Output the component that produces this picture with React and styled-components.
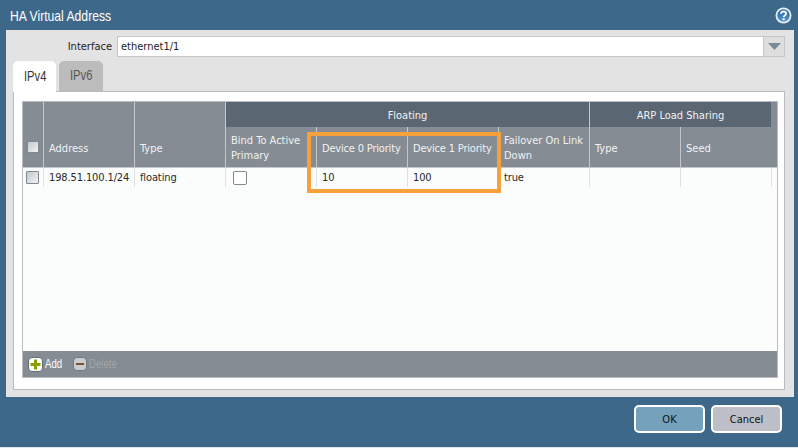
import React from "react";
import styled, { createGlobalStyle } from "styled-components";

const GlobalStyle = createGlobalStyle`
  html, body {
    margin: 0;
    padding: 0;
    background: #3d6889;
  }
  body {
    font-family: "DejaVu Sans Condensed", "DejaVu Sans", sans-serif;
    font-size: 11px;
    color: #222;
  }
`;

const Dialog = styled.div`
  position: relative;
  width: 798px;
  height: 448px;
  overflow: hidden;
  background: #3d6889;
  border-bottom: 1px solid #dfe8ee;
  box-sizing: border-box;
  display: flex;
  flex-direction: column;
`;

// squeezed text, the original font is narrower than anything installed
const Narrow = styled.span`
  display: inline-block;
  width: ${(p) => p.$width}px;
  font-family: "Liberation Sans", sans-serif;
  font-size: ${(p) => p.$size}px;
  white-space: nowrap;
  transform: scaleX(${(p) => p.$scale});
  transform-origin: left center;
`;

const TitleBar = styled.div`
  height: 30px;
  flex: none;
  display: flex;
  align-items: center;
  justify-content: space-between;
  padding: 0 6px 0 10px;
  color: #fff;
`;

const Panel = styled.div`
  height: 367px;
  flex: none;
  margin: 0 4px 0 6px;
  padding: 6px 9px 7px 7px;
  box-sizing: border-box;
  background: #e3e3e3;
  display: flex;
  flex-direction: column;
`;

const FieldRow = styled.div`
  display: flex;
  align-items: center;
  height: 21px;
  flex: none;
`;

const FieldLabel = styled.label`
  width: 99px;
  margin-right: 5px;
  text-align: right;
`;

const Combo = styled.div`
  flex: 1;
  height: 21px;
  box-sizing: border-box;
  border: 1px solid #c6c6c6;
  background: #fff;
  display: flex;
  align-items: center;
  padding-left: 3px;
`;

const ComboValue = styled.span`
  flex: 1;
`;

const ComboButton = styled.div`
  width: 20px;
  height: 19px;
  background: #dedede;
  border-left: 1px solid #c6c6c6;
  display: flex;
  align-items: center;
  justify-content: center;
`;

const Tabs = styled.div`
  display: flex;
  gap: 3px;
  margin-top: 4px;
  height: 30px;
  flex: none;
`;

const Tab = styled.div`
  width: ${(p) => (p.$active ? 43 : 44)}px;
  box-sizing: border-box;
  display: flex;
  align-items: center;
  justify-content: center;
  padding-bottom: 2px;
  border-radius: 5px 5px 0 0;
  color: ${(p) => (p.$active ? "#333" : "#555")};
  background: ${(p) => (p.$active ? "#fff" : "#bcbcbc")};
  margin-bottom: ${(p) => (p.$active ? "-1px" : "0")};
  position: relative;
`;

const TabBody = styled.div`
  flex: 1;
  box-sizing: border-box;
  border: 1px solid #bbb;
  background: #fff;
  padding: 9px 9px 11px 8px;
  display: flex;
`;

const GridFrame = styled.div`
  flex: 1;
  box-sizing: border-box;
  border: 1px solid #b9bdc1;
  background: #fafdfb;
  display: flex;
  flex-direction: column;
`;

const Head = styled.div`
  display: grid;
  grid-template-columns: 20px repeat(8, 91px) 1fr;
  grid-template-rows: 25px 40px;
  background: #858c93;
  color: #f1f3f4;
  border-bottom: 1px solid #c4c8cb;
  flex: none;
`;

const HeadCell = styled.div`
  grid-column: ${(p) => p.$col};
  grid-row: ${(p) => p.$row || 2};
  box-sizing: border-box;
  border-left: ${(p) => (p.$first ? "none" : "1px solid #c4c8cb")};
  padding: ${(p) => (p.$first ? "0 0 14px 4px" : p.$tall ? "0 0 11px 5px" : "2px 0 0 5px")};
  display: flex;
  align-items: ${(p) => (p.$tall ? "flex-end" : "center")};
  line-height: 15px;
`;

const NoWrap = styled.span`
  white-space: nowrap;
  letter-spacing: -0.18px;
`;

const BandCell = styled.div`
  grid-column: ${(p) => p.$col};
  grid-row: 1;
  background: #5a6773;
  border-left: 1px solid #c4c8cb;
  display: flex;
  align-items: center;
  justify-content: center;
  padding-top: 1px;
`;

const Row = styled.div`
  display: grid;
  grid-template-columns: 20px repeat(8, 91px) 1fr;
  height: 19px;
  flex: none;
`;

const Cell = styled.div`
  box-sizing: border-box;
  border-left: ${(p) => (p.$first ? "none" : "1px solid #dfe1e3")};
  padding-left: ${(p) => p.$indent || 5}px;
  display: flex;
  align-items: center;
  white-space: nowrap;
  letter-spacing: -0.12px;
  color: #2a2a2a;
`;

const GridBody = styled.div`
  flex: 1;
`;

const Toolbar = styled.div`
  height: 26px;
  flex: none;
  background: #858c93;
  display: flex;
  align-items: center;
  padding-left: 5px;
`;

const ToolButton = styled.div`
  display: flex;
  align-items: center;
  gap: 2px;
  margin-right: 11px;
  color: ${(p) => (p.$disabled ? "#a0a5aa" : "#fff")};
`;

const SelectBox = styled.span`
  display: block;
  flex: none;
  box-sizing: border-box;
  width: ${(p) => p.$size}px;
  height: ${(p) => p.$size}px;
  border: 1px solid #7d8890;
  background: ${(p) => (p.$plain ? "#fff" : "linear-gradient(135deg, #c5c8cb, #f1f2f3)")};
  border-radius: ${(p) => (p.$plain ? "2px" : "1px")};
`;

const Highlight = styled.div`
  position: absolute;
  left: 307px;
  top: 132px;
  width: 194px;
  height: 61px;
  box-sizing: border-box;
  border: 4px solid #f7a13d;
  pointer-events: none;
`;

const Footer = styled.div`
  flex: 1;
  display: flex;
  justify-content: flex-end;
  gap: 6px;
  padding: 8px 16px 0 0;
`;

const Button = styled.button`
  width: 71px;
  height: 28px;
  box-sizing: border-box;
  border: 2px solid #fff;
  border-radius: 5px;
  font: inherit;
  font-size: 11px;
  color: #111;
  background: ${(p) => (p.$primary ? "#75a1bd" : "#bcbfc8")};
`;

const HelpIcon = () => (
  <svg width="17" height="17" viewBox="0 0 17 17">
    <defs>
      <linearGradient id="helpFill" x1="0" y1="0" x2="0" y2="1">
        <stop offset="0" stopColor="#1f5f9c" />
        <stop offset="1" stopColor="#5b9ad0" />
      </linearGradient>
    </defs>
    <circle cx="8.5" cy="8.5" r="8" fill="#e6eef4" />
    <circle cx="8.5" cy="8.5" r="6.2" fill="url(#helpFill)" />
    <path d="M6 6.8c.1-1.5 1.2-2.3 2.6-2.3 1.5 0 2.5.9 2.5 2.1 0 1.8-2.4 1.8-2.5 3.5" fill="none" stroke="#fff" strokeWidth="1.9" />
    <rect x="7.6" y="11.2" width="2" height="2" fill="#fff" />
  </svg>
);

const AddIcon = () => (
  <svg width="15" height="15" viewBox="0 0 15 15">
    <rect x="0.5" y="0.5" width="14" height="14" rx="3.5" fill="#fff" stroke="#5f6b75" />
    <path d="M6 2.5h3V6h3.5v3H9v3.5H6V9H2.5V6H6z" fill="#8aa000" />
  </svg>
);

const DeleteIcon = () => (
  <svg width="14" height="14" viewBox="0 0 14 14">
    <rect x="0.5" y="0.5" width="13" height="13" rx="3.5" fill="#c9cbcd" stroke="#6f7a83" />
    <rect x="3" y="6" width="8" height="2" fill="#7d4e3a" />
  </svg>
);

const columns = [
  { col: 2, label: "Address", tall: true },
  { col: 3, label: "Type", tall: true },
  { col: 4, label: "Bind To Active Primary" },
  { col: 5, label: "Device 0 Priority", nowrap: true },
  { col: 6, label: "Device 1 Priority", nowrap: true },
  { col: 7, label: "Failover On Link Down" },
  { col: 8, label: "Type" },
  { col: 9, label: "Seed" },
];

const App = () => {
  return (
    <Dialog>
      <GlobalStyle />
      <TitleBar>
        <Narrow $width={101} $size={15} $scale={0.81}>HA Virtual Address</Narrow>
        <HelpIcon />
      </TitleBar>
      <Panel>
        <FieldRow>
          <FieldLabel>Interface</FieldLabel>
          <Combo>
            <ComboValue>ethernet1/1</ComboValue>
            <ComboButton>
              <svg width="13" height="7" viewBox="0 0 13 7">
                <path d="M0 0h13L6.5 7z" fill="#7c8a94" />
              </svg>
            </ComboButton>
          </Combo>
        </FieldRow>
        <Tabs>
          <Tab $active>
            <Narrow $width={22} $size={14} $scale={0.8}>IPv4</Narrow>
          </Tab>
          <Tab>
            <Narrow $width={23} $size={14} $scale={0.8}>IPv6</Narrow>
          </Tab>
        </Tabs>
        <TabBody>
          <GridFrame>
            <Head>
              <HeadCell $col="1" $row="1 / 3" $first $tall>
                <SelectBox $size={12} />
              </HeadCell>
              {columns.slice(0, 2).map((c) => (
                <HeadCell key={c.col} $col={c.col} $row="1 / 3" $tall>
                  {c.label}
                </HeadCell>
              ))}
              <BandCell $col="4 / 8">Floating</BandCell>
              <BandCell $col="8 / 10">ARP Load Sharing</BandCell>
              {columns.slice(2).map((c) => (
                <HeadCell key={c.col} $col={c.col}>
                  {c.nowrap ? <NoWrap>{c.label}</NoWrap> : <span>{c.label}</span>}
                </HeadCell>
              ))}
            </Head>
            <Row>
              <Cell $first $indent={3}>
                <SelectBox $size={13} />
              </Cell>
              <Cell>198.51.100.1/24</Cell>
              <Cell>floating</Cell>
              <Cell $indent={7}>
                <SelectBox $size={14} $plain />
              </Cell>
              <Cell>10</Cell>
              <Cell>100</Cell>
              <Cell>true</Cell>
              <Cell />
              <Cell />
              <Cell />
            </Row>
            <GridBody />
            <Toolbar>
              <ToolButton>
                <AddIcon />
                <Narrow $width={17} $size={12} $scale={0.8}>Add</Narrow>
              </ToolButton>
              <ToolButton $disabled>
                <DeleteIcon />
                <Narrow $width={28} $size={12} $scale={0.8}>Delete</Narrow>
              </ToolButton>
            </Toolbar>
          </GridFrame>
        </TabBody>
      </Panel>
      <Footer>
        <Button $primary>OK</Button>
        <Button>Cancel</Button>
      </Footer>
      <Highlight />
    </Dialog>
  );
};

export default App;
